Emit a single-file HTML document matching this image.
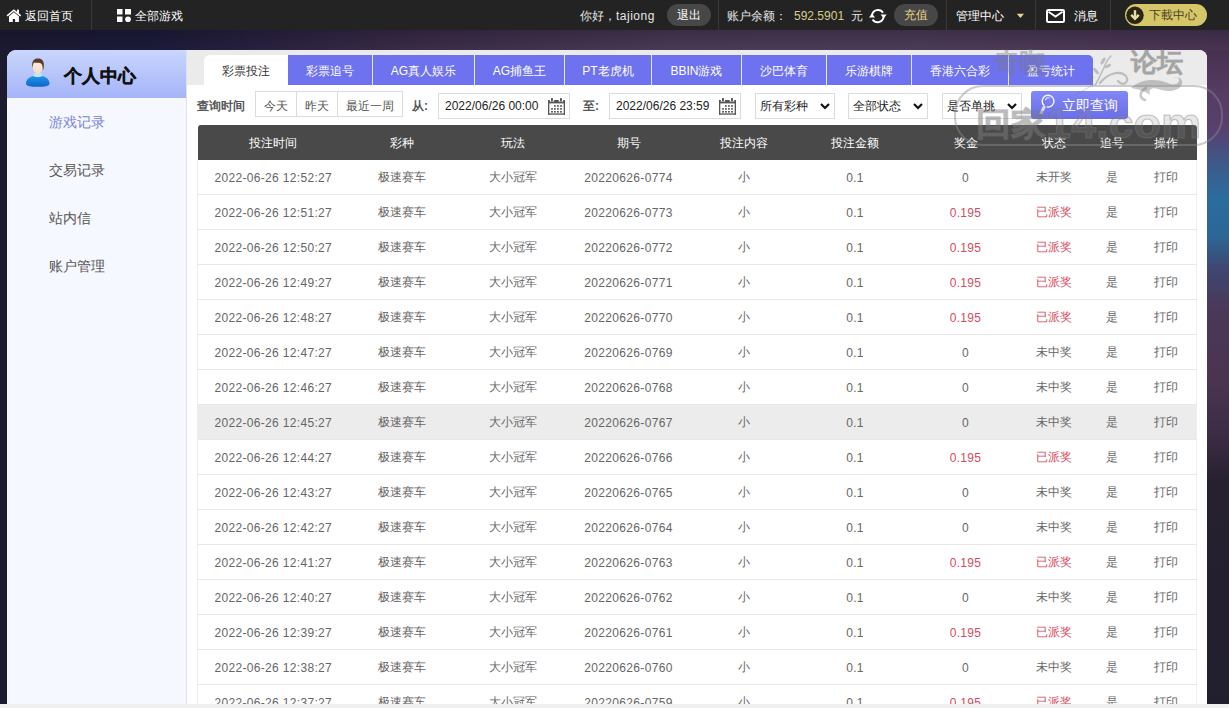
<!DOCTYPE html>
<html><head><meta charset="utf-8">
<style>
*{margin:0;padding:0;box-sizing:border-box}
html,body{width:1229px;height:708px;overflow:hidden}
body{font-family:"Liberation Sans",sans-serif;font-size:12px;position:relative;
background:
 linear-gradient(to bottom, rgba(10,8,20,0.25) 30px, rgba(10,8,20,0) 50px),
 linear-gradient(to right, #1c1a32 0%, #1b1a38 12%, #2a2240 22%, #3a2b47 33%, #4a3a55 55%, #4d3c58 75%, #4a3453 100%);
}
#rstrip{position:absolute;left:1207px;top:50px;width:22px;height:658px;background:linear-gradient(to bottom,#46304f 0px,#553c62 40px,#584070 80px,#3d5a8a 115px,#2a6d9e 150px,#2c6796 185px,#3f4670 220px,#4a3858 260px,#4a3550 330px,#3a2b43 390px,#27212f 430px,#211e2e 654px)}
#lstrip{position:absolute;left:0;top:50px;width:7px;height:658px;background:#1b1a2f}
.abs{position:absolute}
#top{position:absolute;left:0;top:0;width:1229px;height:30px;background:#232323;color:#fff;font-size:12px}
#top .t{position:absolute;top:1px;line-height:30px;white-space:nowrap}
#top .sep{position:absolute;top:0;width:1px;height:30px;background:#393939}
.pill{position:absolute;top:4px;height:22px;border-radius:11px;background:#474747;line-height:22px;text-align:center}
#bottom{position:absolute;left:0;top:704px;width:1229px;height:4px;background:#f0f0f0}
#side{position:absolute;left:7px;top:50px;width:180px;height:654px;background:#f5f8fe;border-right:1px solid #dfe2ea;border-top-left-radius:9px;overflow:hidden}
#side .hd{height:48px;background:linear-gradient(#c9d6fd,#a5b4f8)}
#side .hd .nm{position:absolute;left:57px;top:11px;font-size:18px;font-weight:bold;color:#111;line-height:26px}
#side .mi{position:absolute;left:42px;font-size:14px;color:#555;line-height:20px}
#main{position:absolute;left:187px;top:50px;width:1020px;height:654px;background:#fff;border-top-right-radius:8px;overflow:hidden}
#tabbar{position:absolute;left:0;top:0;width:1020px;height:35px;background:#ebebeb}
.tab{position:absolute;top:5px;height:30px;line-height:29px;padding-top:2px;text-align:center;color:#fff;background:#6f72ee;font-size:12px}
.tab.act{background:#fff;color:#333;border-top-left-radius:6px}
.tsep{position:absolute;top:5px;width:1px;height:30px;background:#e6e6f8}
.lbl{position:absolute;top:45px;line-height:22px;color:#555;font-weight:bold}
.btng{position:absolute;left:68px;top:41px;height:26px;border:1px solid #dcdcdc;display:flex}
.btng div{height:24px;line-height:24px;padding:2px 8px 0;color:#555;border-right:1px solid #dcdcdc}
.btng div:last-child{border-right:0}
.inp{position:absolute;top:43px;height:26px;width:132px;border:1px solid #dcdcdc;line-height:25px;padding-left:6px;color:#222;font-size:12px}
.sel{position:absolute;top:43px;height:26px;width:80px;border:1px solid #dcdcdc;line-height:25px;padding-left:4px;color:#222}
.sel svg{position:absolute;right:4px;top:9px}
.cal{position:absolute;left:109px;top:4px}
#go{position:absolute;left:844px;top:41px;width:97px;height:28px;border-radius:3px;background:linear-gradient(#8186f7,#6a6ee8);color:#fff;font-size:14px;line-height:28px}
table{position:absolute;left:10px;top:75px;width:999px;border-collapse:collapse;table-layout:fixed}
th{height:35px;padding-top:1px;background:#494949;color:#fff;font-weight:normal;font-size:12px;text-align:center}
th:first-child{border-top-left-radius:3px}
th:last-child{border-top-right-radius:3px}
td{height:35px;padding-top:2px;text-align:center;color:#666;font-size:12px;border-bottom:1px solid #e8e8e8}
tr.hov td{background:#ececec}
tbody tr:first-child td{height:34px}
td.r{color:#d64b5d}
.n{letter-spacing:0.33px}
tbody tr td:first-child{border-left:1px solid #eee}
tbody tr td:last-child{border-right:1px solid #eee;padding-right:4px}
th:last-child{padding-right:4px}
#wm{position:absolute;left:0;top:0;width:1229px;height:708px;pointer-events:none}
</style></head><body>
<div id="rstrip"></div><div id="lstrip"></div>
<div id="top">
  <svg class="abs" style="left:4px;top:5px" width="20" height="20" viewBox="4 5 20 20"><g fill="#fff"><path d="M6.6 15.3 L13.9 9.2 L21.2 15.3 L20.2 16.5 L13.9 11.3 L7.6 16.5 Z"/><rect x="17" y="9.6" width="2" height="3.8"/><path d="M9 16.3 L13.9 12.3 L18.9 16.3 L18.9 22 L15.1 22 L15.1 19 L12.8 19 L12.8 22 L9 22 Z"/></g></svg>
  <div class="t" style="left:25px">返回首页</div>
  <div class="sep" style="left:91px"></div>
  <svg class="abs" style="left:117px;top:9px" width="14" height="13" viewBox="0 0 14 13"><rect x="0" y="0" width="5.5" height="5.5" fill="#fff"/><rect x="8" y="0" width="6" height="5.5" fill="#fff"/><rect x="0" y="7.5" width="5.5" height="5.5" fill="#fff"/><circle cx="11" cy="10.3" r="2.9" fill="#fff"/></svg>
  <div class="t" style="left:135px">全部游戏</div>
  <div class="t" style="left:580px;color:#e6e6e6">你好，<span style="letter-spacing:0.5px">tajiong</span></div>
  <div class="pill" style="left:667px;width:44px;color:#fff">退出</div>
  <div class="sep" style="left:718px"></div>
  <div class="t" style="left:727px;color:#e6e6e6">账户余额：</div>
  <div class="t" style="left:794px;color:#d8cb8c">592.5901</div>
  <div class="t" style="left:851px;color:#e6e6e6">元</div>
  <svg class="abs" style="left:868px;top:7px" width="20" height="18" viewBox="868 7 20 18"><g fill="none" stroke="#fff" stroke-width="1.9"><path d="M872 15.2 A6 6 0 0 1 883 12.8"/><path d="M883.6 17.2 A6 6 0 0 1 872.6 19.4"/></g><path d="M880.6 14.6 L886.6 14.6 L883.6 18.6 Z" fill="#fff"/><path d="M869 17.6 L875 17.6 L872 13.6 Z" fill="#fff"/></svg>
  <div class="pill" style="left:894px;width:44px;color:#e5d38a">充值</div>
  <div class="sep" style="left:946px"></div>
  <div class="t" style="left:956px;color:#fff">管理中心</div>
  <svg class="abs" style="left:1016px;top:13px" width="9" height="6" viewBox="0 0 9 6"><path d="M0.8 0.8 L8 0.8 L4.4 5 Z" fill="#e3d79a"/></svg>
  <div class="sep" style="left:1035px"></div>
  <svg class="abs" style="left:1046px;top:9px" width="19" height="14" viewBox="0 0 19 14"><rect x="1" y="1" width="17" height="12" rx="1.2" stroke="#fff" stroke-width="2" fill="none"/><path d="M2.5 2.8 L9.5 7.6 L16.5 2.8" stroke="#fff" stroke-width="1.8" fill="none"/></svg>
  <div class="t" style="left:1074px;color:#fff">消息</div>
  <div class="sep" style="left:1110px"></div>
  <div class="pill" style="left:1125px;width:82px;background:#d6c66a;color:#463f1c;text-align:left;padding-left:24px;top:4px;height:22px;line-height:23px;border-radius:11px">下載中心</div>
  <svg class="abs" style="left:1126px;top:6px" width="18" height="18" viewBox="0 0 18 18"><circle cx="9" cy="9.3" r="8.7" fill="#2a2514"/><path d="M9 4.2 L9 12" stroke="#e8dfa8" stroke-width="2.4"/><path d="M5.2 8.8 L9 12.8 L12.8 8.8" stroke="#e8dfa8" stroke-width="2.4" fill="none"/></svg>
</div>

<div id="side">
  <div class="hd"></div>
  <svg class="abs" style="left:13px;top:2px" width="40" height="40" viewBox="20 52 40 40"><defs><linearGradient id="bd" x1="0" y1="0" x2="0" y2="1"><stop offset="0" stop-color="#2196ea"/><stop offset="1" stop-color="#0b67cc"/></linearGradient><linearGradient id="fc" x1="0" y1="0" x2="0" y2="1"><stop offset="0" stop-color="#fdf0dc"/><stop offset="1" stop-color="#f6dcc0"/></linearGradient></defs><path d="M26 83.5 C26 78.5 31 75.5 37.7 75.5 C44.5 75.5 49.5 78.5 49.5 83.5 C49.5 86.5 44 86.8 37.7 86.8 C31.5 86.8 26 86.5 26 83.5Z" fill="url(#bd)"/><path d="M34.5 73 L41 73 L42.5 76 C40 77.5 35.5 77.5 33 76Z" fill="#bfe6f5"/><ellipse cx="37.8" cy="66.8" rx="5" ry="6.8" fill="url(#fc)"/><path d="M32.4 68 C31.5 61 34 58.6 37.8 58.6 C42 58.6 44.5 61 43.8 67.5 C43.5 69 43.2 70 42.8 70.5 C43 66 42 63.5 40 63 C38 62.5 35.5 63 34 62.5 C33 64 32.8 66 32.4 68Z" fill="#5b3b2a"/></svg>
  <div style="position:absolute;left:57px;top:13px;font-size:18px;font-weight:bold;color:#111;line-height:26px;-webkit-text-stroke:0.35px #111">个人中心</div>
  <div class="mi" style="top:62px;color:#7b82d8">游戏记录</div>
  <div class="mi" style="top:110px">交易记录</div>
  <div class="mi" style="top:158px">站内信</div>
  <div class="mi" style="top:206px">账户管理</div>
</div>

<div id="main">
  <div id="tabbar"></div>
  <div class="tab act" style="left:17px;width:84px">彩票投注</div>
  <div class="tab" style="left:101px;width:84px">彩票追号</div>
  <div class="tsep" style="left:185px"></div>
  <div class="tab" style="left:186px;width:101px">AG真人娱乐</div>
  <div class="tsep" style="left:287px"></div>
  <div class="tab" style="left:288px;width:89px">AG捕鱼王</div>
  <div class="tsep" style="left:377px"></div>
  <div class="tab" style="left:378px;width:86px">PT老虎机</div>
  <div class="tsep" style="left:464px"></div>
  <div class="tab" style="left:465px;width:89px">BBIN游戏</div>
  <div class="tsep" style="left:554px"></div>
  <div class="tab" style="left:555px;width:84px">沙巴体育</div>
  <div class="tsep" style="left:639px"></div>
  <div class="tab" style="left:640px;width:84px">乐游棋牌</div>
  <div class="tsep" style="left:724px"></div>
  <div class="tab" style="left:725px;width:96px">香港六合彩</div>
  <div class="tsep" style="left:821px"></div>
  <div class="tab" style="left:822px;width:84px;border-top-right-radius:5px">盈亏统计</div>

  <div class="lbl" style="left:10px">查询时间</div>
  <div class="btng"><div>今天</div><div>昨天</div><div>最近一周</div></div>
  <div class="lbl" style="left:225px">从:</div>
  <div class="inp" style="left:251px">2022/06/26 00:00
    <svg class="cal" width="17" height="17" viewBox="0 0 17 17"><g fill="#555"><rect x="0" y="3.6" width="17" height="1.8"/><rect x="0" y="2" width="1.8" height="2"/><rect x="6.1" y="2" width="4.6" height="2"/><rect x="15.2" y="2" width="1.8" height="2"/><rect x="3" y="0" width="1.9" height="3.4" rx="0.6"/><rect x="12" y="0" width="1.9" height="3.4" rx="0.6"/><rect x="0" y="4" width="1.3" height="12.7"/><rect x="15.7" y="4" width="1.3" height="12.7"/><rect x="0" y="15.4" width="17" height="1.3"/><rect x="6" y="7.2" width="1.8" height="1.6"/><rect x="9" y="7.2" width="1.8" height="1.6"/><rect x="12.1" y="7.2" width="1.8" height="1.6"/><rect x="3.1" y="10.1" width="1.8" height="1.6"/><rect x="6" y="10.1" width="1.8" height="1.6"/><rect x="9" y="10.1" width="1.8" height="1.6"/><rect x="12.1" y="10.1" width="1.8" height="1.6"/><rect x="3.1" y="13" width="1.8" height="1.6"/><rect x="6" y="13" width="1.8" height="1.6"/><rect x="9" y="13" width="1.8" height="1.6"/><rect x="12.1" y="13" width="1.8" height="1.6"/></g></svg></div>
  <div class="lbl" style="left:396px">至:</div>
  <div class="inp" style="left:422px">2022/06/26 23:59
    <svg class="cal" width="17" height="17" viewBox="0 0 17 17"><g fill="#555"><rect x="0" y="3.6" width="17" height="1.8"/><rect x="0" y="2" width="1.8" height="2"/><rect x="6.1" y="2" width="4.6" height="2"/><rect x="15.2" y="2" width="1.8" height="2"/><rect x="3" y="0" width="1.9" height="3.4" rx="0.6"/><rect x="12" y="0" width="1.9" height="3.4" rx="0.6"/><rect x="0" y="4" width="1.3" height="12.7"/><rect x="15.7" y="4" width="1.3" height="12.7"/><rect x="0" y="15.4" width="17" height="1.3"/><rect x="6" y="7.2" width="1.8" height="1.6"/><rect x="9" y="7.2" width="1.8" height="1.6"/><rect x="12.1" y="7.2" width="1.8" height="1.6"/><rect x="3.1" y="10.1" width="1.8" height="1.6"/><rect x="6" y="10.1" width="1.8" height="1.6"/><rect x="9" y="10.1" width="1.8" height="1.6"/><rect x="12.1" y="10.1" width="1.8" height="1.6"/><rect x="3.1" y="13" width="1.8" height="1.6"/><rect x="6" y="13" width="1.8" height="1.6"/><rect x="9" y="13" width="1.8" height="1.6"/><rect x="12.1" y="13" width="1.8" height="1.6"/></g></svg></div>
  <div class="sel" style="left:568px">所有彩种<svg width="10" height="7" viewBox="0 0 10 7"><path d="M1 1 L5 5 L9 1" stroke="#111" stroke-width="2.2" fill="none"/></svg></div>
  <div class="sel" style="left:661px">全部状态<svg width="10" height="7" viewBox="0 0 10 7"><path d="M1 1 L5 5 L9 1" stroke="#111" stroke-width="2.2" fill="none"/></svg></div>
  <div class="sel" style="left:755px">是否单挑<svg width="10" height="7" viewBox="0 0 10 7"><path d="M1 1 L5 5 L9 1" stroke="#111" stroke-width="2.2" fill="none"/></svg></div>
  <div id="go"><svg class="abs" style="left:0;top:-1px" width="30" height="30" viewBox="1031 90 30 30"><path d="M1044.2 105.6 A5.9 5.9 0 1 1 1046.8 106.9" fill="none" stroke="#f4f4ff" stroke-width="1.5"/><path d="M1045.3 100.2 A3.3 3.3 0 0 1 1049.6 97.9" fill="none" stroke="#e8e8ff" stroke-width="1.1"/><path d="M1043.4 105.2 L1046 106.6 L1042.2 114.6 L1039.4 113.2 Z" fill="#d9dae8"/></svg><span class="abs" style="left:31px;top:0">立即查询</span></div>

  <table>
   <colgroup><col style="width:151px"><col style="width:107px"><col style="width:115px"><col style="width:116px"><col style="width:115px"><col style="width:107px"><col style="width:114px"><col style="width:62px"><col style="width:55px"><col style="width:57px"></colgroup>
   <thead><tr><th>投注时间</th><th>彩种</th><th>玩法</th><th>期号</th><th>投注内容</th><th>投注金额</th><th>奖金</th><th>状态</th><th>追号</th><th>操作</th></tr></thead>
   <tbody>
<tr><td><span class="n">2022-06-26 12:52:27</span></td><td>极速赛车</td><td>大小冠军</td><td><span class="n">20220626-0774</span></td><td>小</td><td><span class="n">0.1</span></td><td><span class="n">0</span></td><td>未开奖</td><td>是</td><td>打印</td></tr>
<tr><td><span class="n">2022-06-26 12:51:27</span></td><td>极速赛车</td><td>大小冠军</td><td><span class="n">20220626-0773</span></td><td>小</td><td><span class="n">0.1</span></td><td class=r><span class="n">0.195</span></td><td class=r>已派奖</td><td>是</td><td>打印</td></tr>
<tr><td><span class="n">2022-06-26 12:50:27</span></td><td>极速赛车</td><td>大小冠军</td><td><span class="n">20220626-0772</span></td><td>小</td><td><span class="n">0.1</span></td><td class=r><span class="n">0.195</span></td><td class=r>已派奖</td><td>是</td><td>打印</td></tr>
<tr><td><span class="n">2022-06-26 12:49:27</span></td><td>极速赛车</td><td>大小冠军</td><td><span class="n">20220626-0771</span></td><td>小</td><td><span class="n">0.1</span></td><td class=r><span class="n">0.195</span></td><td class=r>已派奖</td><td>是</td><td>打印</td></tr>
<tr><td><span class="n">2022-06-26 12:48:27</span></td><td>极速赛车</td><td>大小冠军</td><td><span class="n">20220626-0770</span></td><td>小</td><td><span class="n">0.1</span></td><td class=r><span class="n">0.195</span></td><td class=r>已派奖</td><td>是</td><td>打印</td></tr>
<tr><td><span class="n">2022-06-26 12:47:27</span></td><td>极速赛车</td><td>大小冠军</td><td><span class="n">20220626-0769</span></td><td>小</td><td><span class="n">0.1</span></td><td><span class="n">0</span></td><td>未中奖</td><td>是</td><td>打印</td></tr>
<tr><td><span class="n">2022-06-26 12:46:27</span></td><td>极速赛车</td><td>大小冠军</td><td><span class="n">20220626-0768</span></td><td>小</td><td><span class="n">0.1</span></td><td><span class="n">0</span></td><td>未中奖</td><td>是</td><td>打印</td></tr>
<tr class="hov"><td><span class="n">2022-06-26 12:45:27</span></td><td>极速赛车</td><td>大小冠军</td><td><span class="n">20220626-0767</span></td><td>小</td><td><span class="n">0.1</span></td><td><span class="n">0</span></td><td>未中奖</td><td>是</td><td>打印</td></tr>
<tr><td><span class="n">2022-06-26 12:44:27</span></td><td>极速赛车</td><td>大小冠军</td><td><span class="n">20220626-0766</span></td><td>小</td><td><span class="n">0.1</span></td><td class=r><span class="n">0.195</span></td><td class=r>已派奖</td><td>是</td><td>打印</td></tr>
<tr><td><span class="n">2022-06-26 12:43:27</span></td><td>极速赛车</td><td>大小冠军</td><td><span class="n">20220626-0765</span></td><td>小</td><td><span class="n">0.1</span></td><td><span class="n">0</span></td><td>未中奖</td><td>是</td><td>打印</td></tr>
<tr><td><span class="n">2022-06-26 12:42:27</span></td><td>极速赛车</td><td>大小冠军</td><td><span class="n">20220626-0764</span></td><td>小</td><td><span class="n">0.1</span></td><td><span class="n">0</span></td><td>未中奖</td><td>是</td><td>打印</td></tr>
<tr><td><span class="n">2022-06-26 12:41:27</span></td><td>极速赛车</td><td>大小冠军</td><td><span class="n">20220626-0763</span></td><td>小</td><td><span class="n">0.1</span></td><td class=r><span class="n">0.195</span></td><td class=r>已派奖</td><td>是</td><td>打印</td></tr>
<tr><td><span class="n">2022-06-26 12:40:27</span></td><td>极速赛车</td><td>大小冠军</td><td><span class="n">20220626-0762</span></td><td>小</td><td><span class="n">0.1</span></td><td><span class="n">0</span></td><td>未中奖</td><td>是</td><td>打印</td></tr>
<tr><td><span class="n">2022-06-26 12:39:27</span></td><td>极速赛车</td><td>大小冠军</td><td><span class="n">20220626-0761</span></td><td>小</td><td><span class="n">0.1</span></td><td class=r><span class="n">0.195</span></td><td class=r>已派奖</td><td>是</td><td>打印</td></tr>
<tr><td><span class="n">2022-06-26 12:38:27</span></td><td>极速赛车</td><td>大小冠军</td><td><span class="n">20220626-0760</span></td><td>小</td><td><span class="n">0.1</span></td><td><span class="n">0</span></td><td>未中奖</td><td>是</td><td>打印</td></tr>
<tr><td><span class="n">2022-06-26 12:37:27</span></td><td>极速赛车</td><td>大小冠军</td><td><span class="n">20220626-0759</span></td><td>小</td><td><span class="n">0.1</span></td><td class=r><span class="n">0.195</span></td><td class=r>已派奖</td><td>是</td><td>打印</td></tr>
   </tbody>
  </table>
</div>
<div id="bottom"></div>
<svg id="wm" width="1229" height="708" viewBox="0 0 1229 708">
  <rect x="955" y="86" width="267" height="59" rx="28" fill="none" stroke="rgba(140,140,140,0.45)" stroke-width="2"/>
  <g font-family="Liberation Sans, sans-serif" font-weight="bold">
  <text x="976" y="135" font-size="32" fill="rgba(140,140,140,0.2)" stroke="rgba(120,120,120,0.42)" stroke-width="1.1" textLength="70" lengthAdjust="spacingAndGlyphs">回家</text>
  <text x="1046" y="138" font-size="42" fill="rgba(140,140,140,0.2)" stroke="rgba(120,120,120,0.42)" stroke-width="1.1" textLength="155" lengthAdjust="spacingAndGlyphs">14.com</text>
  <text x="994" y="71" font-size="26" font-weight="normal" fill="rgba(140,140,140,0.15)" stroke="rgba(120,120,120,0.42)" stroke-width="1.3">奇咖</text>
  <text x="1131" y="71" font-size="26" fill="rgba(120,120,120,0.38)" stroke="rgba(120,120,120,0.4)" stroke-width="0.9">论坛</text>
  </g>
  <g fill="none" stroke="rgba(120,120,120,0.4)" stroke-linecap="round">
   <path d="M1096 84 C1100 76 1104 68 1106 63 C1107 60 1109 58 1111 56" stroke-width="1.6"/><path d="M1076 95 C1084 90 1090 86 1096 84" stroke-width="1.2" stroke="rgba(120,120,120,0.25)"/>
   <path d="M1100 83 C1108 73 1120 70 1126 76 C1130 82 1123 87 1118 81" stroke-width="2.2"/>
   <path d="M1146 88 C1139 92 1139 98 1145 100" stroke-width="2.6"/>
  </g>
  <g fill="rgba(120,120,120,0.4)">
   <ellipse cx="1103" cy="61" rx="1.6" ry="4" transform="rotate(30 1103 61)"/>
   <ellipse cx="1096" cy="71" rx="1.6" ry="4" transform="rotate(-40 1096 71)"/>
   <ellipse cx="1091" cy="79" rx="1.5" ry="3.5" transform="rotate(40 1091 79)"/>
   <ellipse cx="1108" cy="66" rx="1.5" ry="3.5" transform="rotate(60 1108 66)"/>
   <path d="M1131 88 C1140 79 1156 78 1168 83 C1174 86 1179 84 1179 80 C1179 77 1175 76 1173 79 C1178 74 1185 80 1181 86 C1177 92 1166 92 1158 89 C1152 87 1148 90 1150 95 C1146 92 1142 90 1131 88 Z"/>
  </g>
</svg>

</body></html>
